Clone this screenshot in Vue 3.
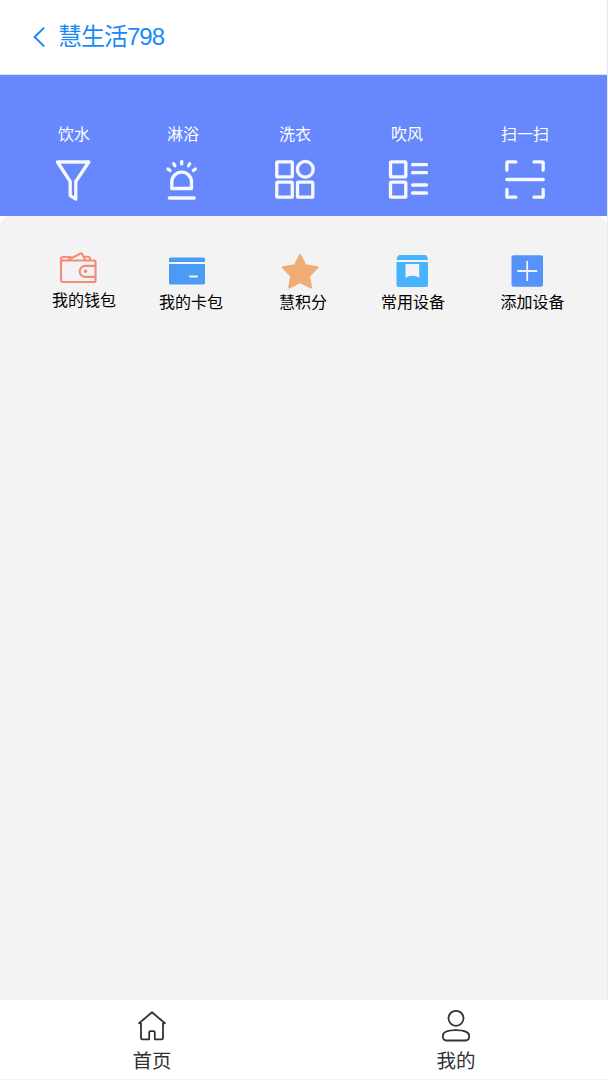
<template>
  <div class="page">
    <header class="nav-bar">
      <svg class="back" viewBox="0 0 14 22" @click="goBack">
        <path d="M12.2 1.6 2.6 11l9.6 9.4" />
      </svg>
      <span class="title">慧生活798</span>
    </header>

    <section class="banner">
      <div class="banner-item" v-for="item in modes" :key="item.name">
        <span>{{ item.name }}</span>
        <svg viewBox="0 0 44 44">
          <path v-for="d in item.paths" :key="d" :d="d" />
        </svg>
      </div>
    </section>

    <main class="content">
      <div class="services">
        <div class="service wallet">
          <svg viewBox="0 0 64 40">
            <path d="M43.500 16V12a1.500 1.500 0 0 0-1.500-1.500H11a2 2 0 0 1-2-2V30a2 2 0 0 0 2 2h31a1.500 1.500 0 0 0 1.500-1.500V27" />
            <path d="M9 9a2 2 0 0 1 2-2h8.500M15 10.500 28.500 3.500a1.200 1.200 0 0 1 1.600.5L33.500 10.500M31.500 6.800H36a2 2 0 0 1 2 2v1.500" />
            <path d="M43.500 15.900H33.200a5.500 5.500 0 0 0 0 11H43.500z" />
            <circle cx="33.600" cy="21.300" r="1.700" />
          </svg>
          <span>我的钱包</span>
        </div>
        <div class="service">
          <svg viewBox="0 0 64 40">
            <path fill="#4b9af3" d="M10 12V9a1.500 1.500 0 0 1 1.500-1.500h33A1.500 1.500 0 0 1 46 9v3zM10 14h36v19a1.500 1.500 0 0 1-1.500 1.500h-33A1.500 1.500 0 0 1 10 33z" />
            <path stroke="#f3f3f3" stroke-width="2" stroke-linecap="round" d="M31 26.600h7" />
          </svg>
          <span>我的卡包</span>
        </div>
        <div class="service">
          <svg viewBox="0 0 64 40">
            <path fill="#f1ac73" stroke="#f1ac73" stroke-width="2" stroke-linejoin="round" d="m29.200 4.900 5.200 10.400 12.200 2-8.500 8.700 2 11.500-10.900-5.300-10.900 5.300 1.800-11.500-8.300-8.700 12.200-2z" />
          </svg>
          <span>慧积分</span>
        </div>
        <div class="service">
          <svg viewBox="0 0 64 40">
            <path fill="#47b2fd" d="M15.500 10 16.300 7A2.500 2.500 0 0 1 18.800 5h25a2.500 2.500 0 0 1 2.400 2L47 10zM15.500 12H47v23a2 2 0 0 1-2 2H17.500a2 2 0 0 1-2-2z" />
            <path fill="#f3f3f3" d="M24.500 14h13.700v13.700q-6.850-4-13.700 0z" />
          </svg>
          <span>常用设备</span>
        </div>
        <div class="service">
          <svg viewBox="0 0 64 40">
            <rect x="10.500" y="5.200" width="31.500" height="31.500" rx="2" fill="#5792fb" />
            <path stroke="#f3f3f3" stroke-width="1.800" stroke-linecap="round" d="M17 21h18.500M26.200 11.700v18.500" />
          </svg>
          <span>添加设备</span>
        </div>
      </div>
    </main>

    <footer class="tab-bar">
      <div class="tab">
        <svg viewBox="0 0 36 36">
          <path d="M4.500 15.700 18 4.300l13.500 11.400M7 13.800V30q0 1.300 1.300 1.300h6.900v-7q0-1.200 1.200-1.200h3.200q1.200 0 1.200 1.200v7h6.900q1.300 0 1.300-1.300V13.800" />
        </svg>
        <span>首页</span>
      </div>
      <div class="tab">
        <svg viewBox="0 0 36 36">
          <circle cx="18" cy="10.300" r="7.500" />
          <path d="M4.800 28C4.800 24 10 22.100 18 22.100S31.200 24 31.200 28c0 3-1.200 4.500-3.700 4.500h-19c-2.500 0-3.700-1.500-3.700-4.500z" />
        </svg>
        <span>我的</span>
      </div>
    </footer>
  </div>
</template>

<script setup>
const modes = [
  {
    name: '饮水',
    paths: ['M5.500 4H36.800L23.800 23.500V41L18.200 37.700V23.500z'],
  },
  {
    name: '淋浴',
    paths: [
      'M10.800 30.500V24a9.850 9.850 0 0 1 19.700 0v6.500z',
      'M8.300 40H33.200',
      'M20.700 3.300v2.600M12.700 5.700l1.200 2.100M28.700 5.700l-1.200 2.100M7 10.900l2 1.700M34.400 10.900l-2 1.700',
    ],
  },
  {
    name: '洗衣',
    paths: [
      'M4.800 3.900h13.500a1 1 0 0 1 1 1v13a1 1 0 0 1-1 1H4.800a1 1 0 0 1-1-1v-13a1 1 0 0 1 1-1z',
      'M24.400 11.300a7.900 7.900 0 0 1 15.800 0a7.900 7.900 0 0 1-15.800 0z',
      'M4.800 24.200h13.500a1 1 0 0 1 1 1v13a1 1 0 0 1-1 1H4.800a1 1 0 0 1-1-1v-13a1 1 0 0 1 1-1z',
      'M25.500 24.200h13.300a1 1 0 0 1 1 1v13a1 1 0 0 1-1 1H25.500a1 1 0 0 1-1-1v-13a1 1 0 0 1 1-1z',
    ],
  },
  {
    name: '吹风',
    paths: [
      'M6.500 3.900h13.300a1 1 0 0 1 1 1v13a1 1 0 0 1-1 1H6.500a1 1 0 0 1-1-1v-13a1 1 0 0 1 1-1z',
      'M6.500 24.200h13.300a1 1 0 0 1 1 1v13a1 1 0 0 1-1 1H6.500a1 1 0 0 1-1-1v-13a1 1 0 0 1 1-1z',
      'M27.500 6.700h14M27.500 14.700h14M27.500 27h14M27.500 35h14',
    ],
  },
  {
    name: '扫一扫',
    paths: [
      'M3.900 12.200V4.900a1 1 0 0 1 1-1h8M31 3.900h8.200a1 1 0 0 1 1 1v7.300',
      'M3.900 31.500v6.700a1 1 0 0 0 1 1h8M31 39.200h8.200a1 1 0 0 0 1-1v-6.700',
      'M3.900 21.500h36.300',
    ],
  },
]

function goBack() {
  window.history.back()
}
</script>

<style>
body {
  background: #fff;
}
</style>

<style scoped>
.page {
  height: 1080px;
  display: flex;
  flex-direction: column;
  box-sizing: border-box;
  border-right: 1px solid #e4e8f8;
  font-family: "Liberation Sans", "Noto Sans CJK SC", sans-serif;
  color: #000;
}

svg {
  display: block;
  fill: none;
}

.nav-bar {
  height: 75px;
  flex-shrink: 0;
  box-sizing: border-box;
  padding-left: 32px;
  border-bottom: 1px solid #dce2f8;
  display: flex;
  align-items: center;
}

.back {
  width: 14px;
  height: 22px;
  margin-right: 12px;
  stroke: #1989fa;
  stroke-width: 2;
  cursor: pointer;
}

.title {
  font-size: 24px;
  line-height: 30px;
  letter-spacing: -1px;
  color: #1989fa;
}

.banner {
  height: 141px;
  flex-shrink: 0;
  box-sizing: border-box;
  padding: 48px 0 0 24px;
  display: grid;
  grid-template-columns: 100px 118px 106px 118px 118px;
  background: #6787fc;
  color: #fff;
}

.banner-item {
  display: flex;
  flex-direction: column;
  align-items: center;
  font-size: 16px;
  line-height: 24px;
}

.banner-item svg {
  width: 44px;
  height: 44px;
  margin-top: 11px;
  stroke: #f8f9ff;
  stroke-width: 3.3;
  stroke-linecap: round;
  stroke-linejoin: round;
}

.content {
  flex: 1;
  border-radius: 10px 10px 0 0;
  background: #f3f3f3;
}

.services {
  display: grid;
  grid-template-columns: 120px 94px 130px 90px 149px;
  padding: 34px 0 0 24px;
}

.service {
  display: flex;
  flex-direction: column;
  align-items: center;
  font-size: 16px;
  line-height: 24px;
}

.service svg {
  width: 64px;
  height: 40px;
  margin-bottom: 1px;
}

.wallet svg {
  margin-bottom: -1px;
  stroke: #f28c7b;
  stroke-width: 2.1;
  stroke-linejoin: round;
}

.wallet circle {
  fill: #f28c7b;
  stroke: none;
}

.tab-bar {
  height: 80px;
  flex-shrink: 0;
  box-sizing: border-box;
  margin-right: -1px;
  border-bottom: 1px solid #f4f4f4;
  display: flex;
  background: #fff;
}

.tab {
  flex: 1;
  display: flex;
  flex-direction: column;
  align-items: center;
  padding-top: 8px;
  font-size: 19.5px;
  line-height: 28px;
  color: #323233;
}

.tab svg {
  width: 36px;
  height: 36px;
  margin-bottom: 3px;
  stroke: #323233;
  stroke-width: 1.8;
  stroke-linejoin: round;
}
</style>
